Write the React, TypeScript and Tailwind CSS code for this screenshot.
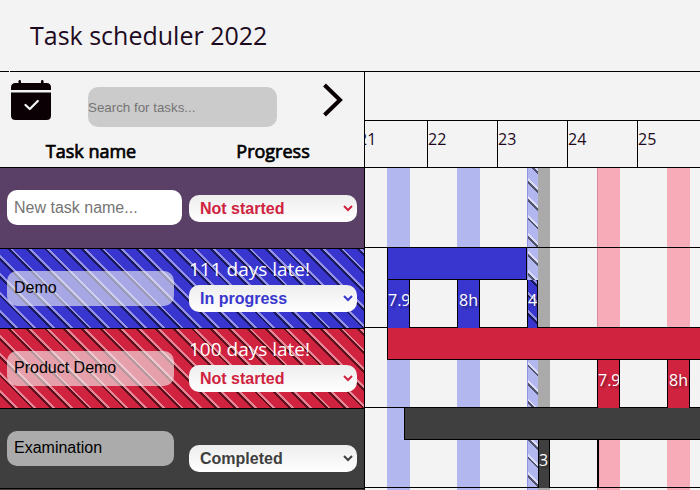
import React from "react";

const HATCH =
  "bg-[repeating-linear-gradient(45deg,transparent_0_9px,rgba(0,0,0,0.55)_9px_11px,rgba(255,255,255,0.45)_11px_13px)]";

function CalendarIcon() {
  return (
    <svg width="40" height="40" viewBox="0 0 40 40" className="mt-2 ml-[11px] block shrink-0">
      <g fill="#0b0003">
        <path d="M0 10V7.500Q0 3 4.500 3H35.500Q40 3 40 7.500V10Z" />
        <path d="M0 12.500H40V35.500Q40 40 35.500 40H4.500Q0 40 0 35.500Z" />
        <rect x="7.500" y="0" width="2.500" height="5" rx="1.200" />
        <rect x="30" y="0" width="2.500" height="5" rx="1.200" />
      </g>
      <path d="M14.500 25L18.800 29L26.800 21" fill="none" stroke="#f3f3f3" strokeWidth="2.300" strokeLinecap="round" strokeLinejoin="round" />
    </svg>
  );
}

function Select({ label, color }: { label: string; color: string }) {
  return (
    <div className={`flex h-[27px] w-[168px] items-center justify-between rounded-[10px] bg-linear-to-b from-[#ededed] to-white pr-1 pl-[11px] font-['Liberation_Sans',sans-serif] text-[16px] font-bold ${color}`}>
      <span>{label}</span>
      <svg width="10" height="7" viewBox="0 0 10 7" fill="none" stroke="currentColor" strokeWidth="2">
        <path d="M1 1L5 5L9 1" />
      </svg>
    </div>
  );
}

type Task = { name: string; late?: string; status: string; bg: string; color: string; hatch?: boolean };

const tasks: Task[] = [
  { name: "Demo", late: "111 days late!", status: "In progress", bg: "bg-[#3936cf]", color: "text-[#3936cf]", hatch: true },
  { name: "Product Demo", late: "100 days late!", status: "Not started", bg: "bg-[#cf233f]", color: "text-[#cf233f]", hatch: true },
  { name: "Examination", status: "Completed", bg: "bg-[#3f3f3f]", color: "text-[#3f3f3f]" },
];

function TaskRow({ task }: { task: Task }) {
  return (
    <div className={`h-20 border-b border-black ${task.bg}`}>
      <div className={`flex h-full ${task.hatch ? HATCH : ""}`}>
        <div className="mt-[22px] ml-[7px] flex h-[35px] w-[167px] items-center rounded-[10px] bg-[#f3f3f3]/60 pb-[2px] pl-[7px] font-['Liberation_Sans',sans-serif] text-[16px] text-black">
          {task.name}
        </div>
        <div className="ml-[15px] pt-2">
          <div className="h-7 text-[19px] leading-[24px] text-white">{task.late}</div>
          <Select label={task.status} color={task.color} />
        </div>
      </div>
    </div>
  );
}

function Cell({ children, className }: { children?: React.ReactNode; className: string }) {
  return (
    <div className={`flex h-12 shrink-0 items-center overflow-hidden border-x border-black pb-[8px] text-[16px] text-white [text-shadow:2px_2px_2px_rgba(0,0,0,0.35)] ${className}`}>
      {children}
    </div>
  );
}

function DayBands() {
  return (
    <div className="absolute inset-0 flex pl-[22px]">
      <div className="w-[23px] shrink-0 bg-[#b3b7f0]" />
      <div className="ml-[47px] w-[23px] shrink-0 bg-[#b3b7f0]" />
      <div className="ml-[47px] w-[11px] shrink-0 border-l border-[#8f93e4] bg-[#b3b7f0] bg-[repeating-linear-gradient(45deg,transparent_0_9px,rgba(0,0,0,0.55)_9px_11px,rgba(255,255,255,0.5)_11px_13px)]" />
      <div className="w-3 shrink-0 bg-[#aaaaaa]" />
      <div className="ml-[47px] w-[23px] shrink-0 border-l border-[#d48e9b] bg-[#f7aab7]" />
      <div className="ml-[47px] w-[23px] shrink-0 bg-[#f7aab7]" />
    </div>
  );
}

export default function App() {
  return (
    <div className="flex h-[490px] w-[700px] flex-col overflow-hidden bg-[#f3f3f3] font-['Open_Sans',sans-serif] text-[#1e0a1e]">
      <header className="flex h-[71px] shrink-0 items-center pl-[30px] text-[25px]">Task scheduler 2022</header>
      <div className="flex h-px shrink-0 bg-black">
        <div className="ml-[9px] w-px bg-[#f3f3f3]" />
      </div>
      <div className="flex min-h-0 flex-1">
        <aside className="w-[365px] shrink-0 border-r border-black">
          <div className="h-24 border-b border-black">
            <div className="flex h-[66px]">
              <CalendarIcon />
              <div className="mt-[15px] ml-[37px] flex h-10 w-[189px] shrink-0 items-center rounded-[10px] bg-[#cbcbcb] pt-[2px] font-['Liberation_Sans',sans-serif] text-[13.333px] text-[#757575]">
                Search for tasks...
              </div>
              <svg width="22" height="34" viewBox="0 0 22 34" className="mt-[11px] ml-[45px]" fill="none" stroke="#0b0003" strokeWidth="4">
                <path d="M2.500 2L18 17L2.500 32" />
              </svg>
            </div>
            <div className="flex text-center text-[18px] leading-[27px] text-black [-webkit-text-stroke:0.7px_black]">
              <div className="w-[182px]">Task name</div>
              <div className="w-[182px]">Progress</div>
            </div>
          </div>
          <div className="flex h-[81px] border-b border-black bg-[#5a4066]">
            <div className="mt-[22px] ml-[7px] flex h-[35px] w-[175px] items-center rounded-[10px] bg-white pl-[7px] font-['Liberation_Sans',sans-serif] text-[16px] text-[#757575]">
              New task name...
            </div>
            <div className="mt-[27px] ml-[7px]">
              <Select label="Not started" color="text-[#cf233f]" />
            </div>
          </div>
          {tasks.map((task) => (
            <TaskRow key={task.name} task={task} />
          ))}
          <div className="h-2 bg-[#3f3f3f]" />
        </aside>
        <main className="flex min-w-0 flex-1 flex-col overflow-hidden">
          <div className="h-[49px] shrink-0 border-b border-black" />
          <div className="-ml-2 flex h-[47px] shrink-0 border-b border-black text-[16px] leading-[36px]">
            <div className="w-[70px] shrink-0 pl-px">21</div>
            <div className="w-[70px] shrink-0 border-l border-black">22</div>
            <div className="w-[70px] shrink-0 border-l border-black">23</div>
            <div className="w-[70px] shrink-0 border-l border-black">24</div>
            <div className="w-[70px] shrink-0 border-l border-black">25</div>
          </div>
          <div className="relative min-h-0 flex-1 overflow-hidden">
            <DayBands />
            <div className="relative h-20 border-b border-black" />
            <div className="relative h-20 border-b border-black">
              <div className="ml-[22px] h-8 w-[140px] border-x border-b border-black bg-[#3936cf]" />
              <div className="flex pl-[22px]">
                <Cell className="w-[23px] bg-[#3936cf]">7.9h</Cell>
                <Cell className="ml-[47px] w-[23px] bg-[#3936cf] pl-px">8h</Cell>
                <Cell className={`ml-[47px] w-[11px] bg-[#3936cf] ${HATCH}`}>4h</Cell>
              </div>
            </div>
            <div className="relative h-20 border-b border-black">
              <div className="ml-[22px] h-8 w-[400px] border-x border-b border-black bg-[#cf233f]" />
              <div className="flex pl-[232px]">
                <Cell className="w-[23px] bg-[#cf233f]">7.9h</Cell>
                <Cell className="ml-[47px] w-[23px] bg-[#cf233f] pl-px">8h</Cell>
              </div>
            </div>
            <div className="relative h-20 border-b border-black">
              <div className="ml-[39px] h-8 w-[400px] border-x border-b border-black bg-[#3f3f3f]" />
              <div className="flex pl-[173px]">
                <Cell className="w-3 bg-[#3f3f3f]">3h</Cell>
                <div className="ml-[47px] h-12 w-[2px] shrink-0 bg-black" />
              </div>
            </div>
          </div>
        </main>
      </div>
    </div>
  );
}
